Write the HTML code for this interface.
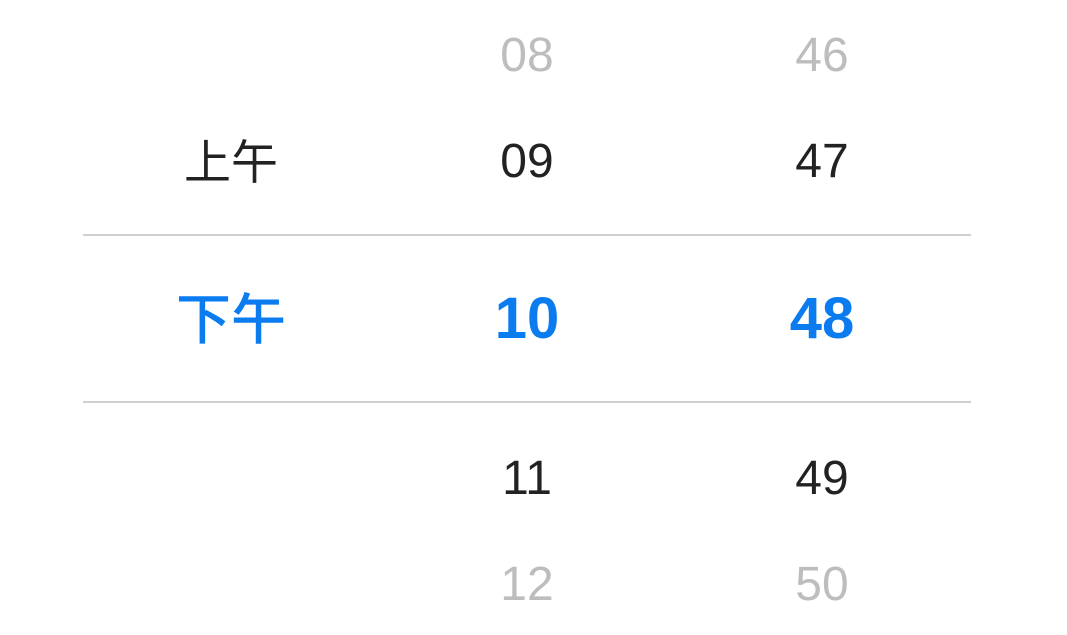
<!DOCTYPE html>
<html><head><meta charset="utf-8"><style>
html,body{margin:0;padding:0;background:#fff;width:1067px;height:635px;overflow:hidden;position:relative;font-family:"Liberation Sans","Noto Sans CJK SC",sans-serif}
.t{position:absolute;width:300px;text-align:center;white-space:nowrap;line-height:1}
.g{color:#bdbdbd;font-size:48px}
.d{color:#222;font-size:48px}
.s{color:#0a7cf0;font-size:58px;font-weight:bold}
.c{font-family:"Noto Sans CJK SC",sans-serif}
.line{position:absolute;left:83px;width:888px;height:2px;background:#d0d0d0}
</style></head><body>
<div class="t g" style="left:377px;top:32px">08</div>
<div class="t g" style="left:672px;top:32px">46</div>
<div class="t d c" style="left:81px;top:135px;font-size:47px">上午</div>
<div class="t d" style="left:377px;top:138px">09</div>
<div class="t d" style="left:672px;top:138px">47</div>
<div class="line" style="top:234px"></div>
<div class="t s c" style="left:81px;top:288px;font-size:55px;font-weight:500">下午</div>
<div class="t s" style="left:377px;top:290px">10</div>
<div class="t s" style="left:672px;top:290px">48</div>
<div class="line" style="top:401px"></div>
<div class="t d" style="left:377px;top:455px">11</div>
<div class="t d" style="left:672px;top:455px">49</div>
<div class="t g" style="left:377px;top:561px">12</div>
<div class="t g" style="left:672px;top:561px">50</div>
</body></html>
